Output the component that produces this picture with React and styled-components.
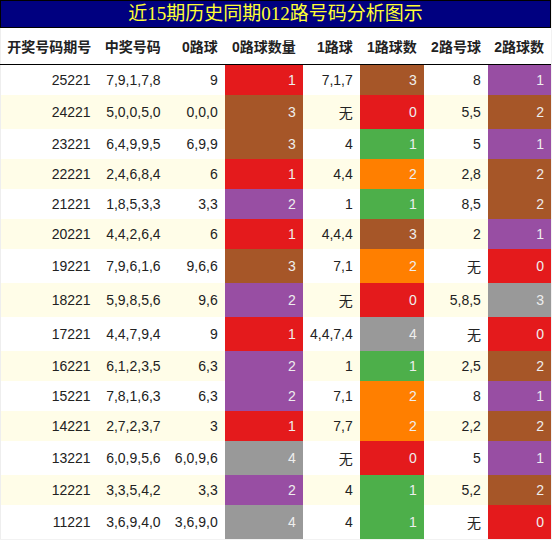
import React from 'react'
import styled, { createGlobalStyle } from 'styled-components'

const RED = '#e41a1c'
const GREEN = '#4daf4a'
const ORANGE = '#ff7f00'
const BROWN = '#a65628'
const PURPLE = '#984ea3'
const GREY = '#999999'

const zeroColors = { 1: RED, 2: PURPLE, 3: BROWN, 4: GREY }
const oneColors = { 0: RED, 1: GREEN, 2: ORANGE, 3: BROWN, 4: GREY }
const twoColors = { 0: RED, 1: PURPLE, 2: BROWN, 3: GREY }

const headers = ['开奖号码期号', '中奖号码', '0路球', '0路球数量', '1路球', '1路球数', '2路号球', '2路球数']
const widths = [97, 70, 57, 78, 57, 64, 64, 63]

const rows = [
    ['25221', '7,9,1,7,8', '9', 1, '7,1,7', 3, '8', 1],
    ['24221', '5,0,0,5,0', '0,0,0', 3, '无', 0, '5,5', 2],
    ['23221', '6,4,9,9,5', '6,9,9', 3, '4', 1, '5', 1],
    ['22221', '2,4,6,8,4', '6', 1, '4,4', 2, '2,8', 2],
    ['21221', '1,8,5,3,3', '3,3', 2, '1', 1, '8,5', 2],
    ['20221', '4,4,2,6,4', '6', 1, '4,4,4', 3, '2', 1],
    ['19221', '7,9,6,1,6', '9,6,6', 3, '7,1', 2, '无', 0],
    ['18221', '5,9,8,5,6', '9,6', 2, '无', 0, '5,8,5', 3],
    ['17221', '4,4,7,9,4', '9', 1, '4,4,7,4', 4, '无', 0],
    ['16221', '6,1,2,3,5', '6,3', 2, '1', 1, '2,5', 2],
    ['15221', '7,8,1,6,3', '6,3', 2, '7,1', 2, '8', 1],
    ['14221', '2,7,2,3,7', '3', 1, '7,7', 2, '2,2', 2],
    ['13221', '6,0,9,5,6', '6,0,9,6', 4, '无', 0, '5', 1],
    ['12221', '3,3,5,4,2', '3,3', 2, '4', 1, '5,2', 2],
    ['11221', '3,6,9,4,0', '3,6,9,0', 4, '4', 1, '无', 0],
]

const App = () => {
    return (
        <Page>
            <GlobalStyle />
            <Title>近15期历史同期012路号码分析图示</Title>
            <Table>
                <colgroup>
                    {widths.map((w, i) => <col key={i} style={{ width: w }} />)}
                </colgroup>
                <thead>
                    <tr>
                        {headers.map(h => <Head key={h}>{h}</Head>)}
                    </tr>
                </thead>
                <tbody>
                    {rows.map((r, i) => {
                        const tall = r.includes('无')
                        return <Row key={r[0]} $striped={i % 2 === 1} $tall={tall}>
                            <Cell>{r[0]}</Cell>
                            <Cell>{r[1]}</Cell>
                            <Cell>{r[2]}</Cell>
                            <Count $bg={zeroColors[r[3]]}>{r[3]}</Count>
                            <Cell>{r[4]}</Cell>
                            <Count $bg={oneColors[r[5]]}>{r[5]}</Count>
                            <Cell>{r[6]}</Cell>
                            <Count $bg={twoColors[r[7]]}>{r[7]}</Count>
                        </Row>
                    })}
                </tbody>
            </Table>
        </Page>
    )
}

const GlobalStyle = createGlobalStyle`
    body {
        margin: 0;
        background: #f2f2f2;
        font-family: "Liberation Sans", "Noto Sans CJK SC", sans-serif;
    }
`

const Page = styled.div`
    width: 551px;
    background: #fff;
`

const Title = styled.div`
    box-sizing: border-box;
    height: 28px;
    border: 1px solid #000;
    background: #000080;
    color: #ffff33;
    font-family: "Liberation Serif", "Noto Sans CJK SC", serif;
    font-size: 19px;
    line-height: 26px;
    text-align: center;
`

const Table = styled.table`
    width: 551px;
    table-layout: fixed;
    border-collapse: collapse;
    border-left: 1px solid #eeeeee;
    font-size: 14px;
    color: #222;
`

const Head = styled.th`
    height: 36px;
    padding: 0 7px 0 0;
    text-align: right;
    font-weight: bold;
    white-space: nowrap;
    border-bottom: 1px solid #000;
    &:first-child {
        text-align: center;
        padding: 0;
    }
`

const Row = styled.tr`
    height: ${p => (p.$tall ? 34 : 30)}px;
    background: ${p => (p.$striped ? '#fffde8' : '#ffffff')};
`

const Cell = styled.td`
    padding: 0 7px 0 0;
    text-align: right;
    white-space: nowrap;
`

const Count = styled(Cell)`
    background: ${p => p.$bg};
    color: #eeeeee;
`

export default App
